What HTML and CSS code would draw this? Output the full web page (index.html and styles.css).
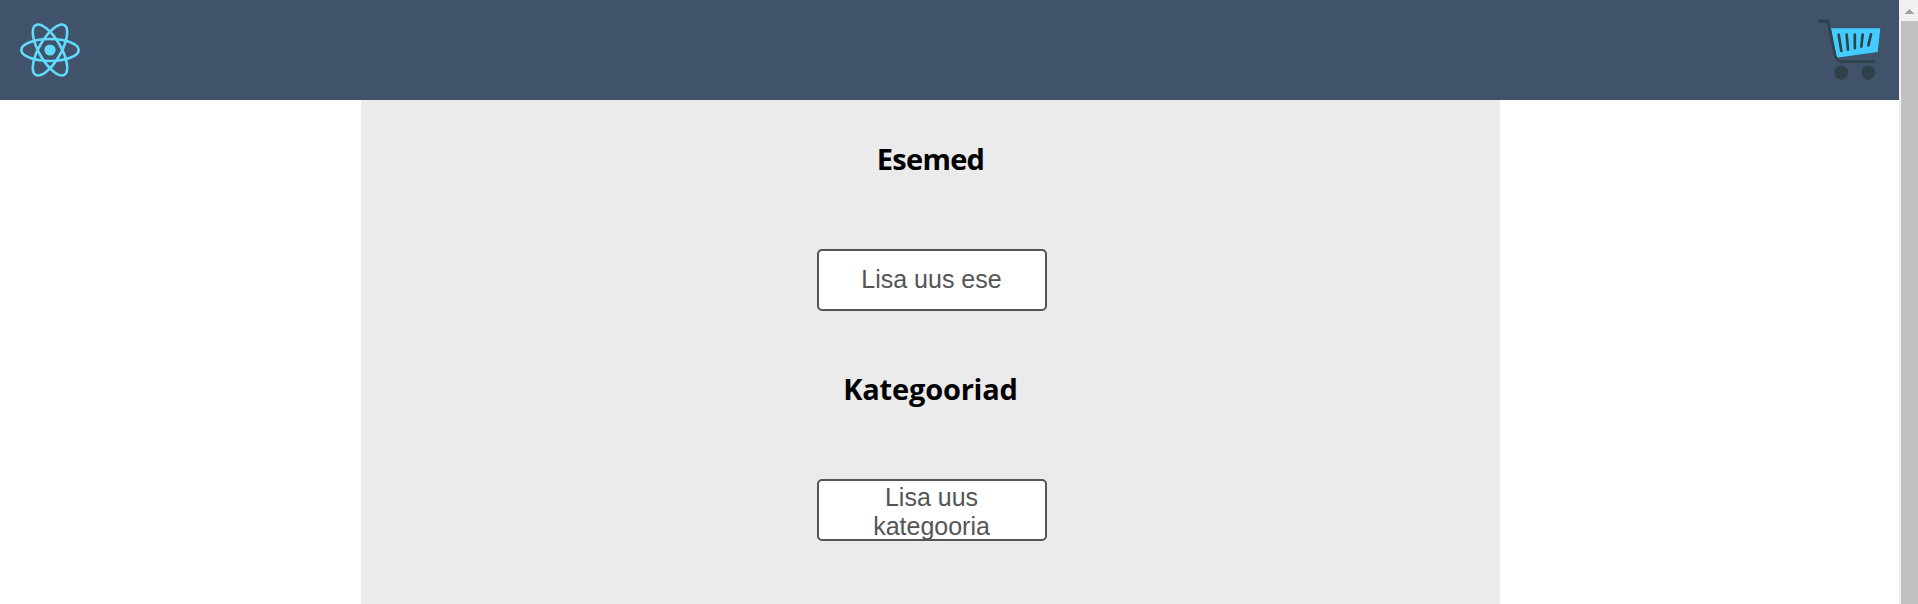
FILE: index.html
```html
<!DOCTYPE html>
<html lang="et">
<head>
<meta charset="utf-8">
<title>Admin</title>
<link rel="stylesheet" href="styles.css">
</head>
<body>
<div class="page">
  <header class="navbar">
    <svg class="logo" viewBox="-11.5 -11.5 23 23">
      <circle r="2.15" fill="#61dafb"/>
      <g fill="none" stroke="#61dafb">
        <ellipse rx="11" ry="4.2"/>
        <ellipse rx="11" ry="4.2" transform="rotate(60)"/>
        <ellipse rx="11" ry="4.2" transform="rotate(120)"/>
      </g>
    </svg>
    <svg class="cart" viewBox="50 55 195 190">
      <path d="M92 86H240L232 157L108 174Z" fill="#43ccff"/>
      <g fill="none" stroke="#2f4149" stroke-width="8" stroke-linecap="round" stroke-linejoin="round">
        <path d="M57 64.500H83L104 166Q109 186 126 186H221"/>
        <path d="M115 105L123 154M139 105L143 150M163.500 105V146M187 105L183 141M212 104L204 137"/>
      </g>
      <g fill="#2f4149"><circle cx="123" cy="219" r="21"/><circle cx="204" cy="219" r="21"/></g>
    </svg>
  </header>
  <main class="content">
    <section class="group">
      <h2 class="title title-short">Esemed</h2>
      <button class="button">Lisa uus ese</button>
    </section>
    <section class="group">
      <h2 class="title">Kategooriad</h2>
      <button class="button button-wrap">Lisa uus kategooria</button>
    </section>
  </main>
</div>
<div class="scrollbar">
  <div class="scroll-up"><svg class="arrow" viewBox="0 0 9 5" shape-rendering="crispEdges"><path d="M4 0h1v1h1v1h1v1h1v1h1v1H0V4h1V3h1V2h1V1h1z" fill="#a3a3a3"/></svg></div>
  <div class="thumb"></div>
</div>
</body>
</html>
```
FILE: styles.css
```css
body {
  margin: 0;
  height: 604px;
  display: flex;
  overflow: hidden;
  background: #fff;
}
.page {
  width: 1899px;
}
.navbar {
  height: 100px;
  box-sizing: border-box;
  padding: 0 17px 0 20px;
  display: flex;
  align-items: center;
  justify-content: space-between;
  background: #40536a;
}
.logo {
  width: 60px;
  height: 60px;
}
.cart {
  width: 65px;
  height: 63.330px;
}
.content {
  width: 1139px;
  height: 504px;
  margin-left: 361px;
  background: #ebebeb;
}
.group {
  height: 230px;
  display: flex;
  flex-direction: column;
  align-items: center;
}
.title {
  margin: 39px 0 70px;
  font: 700 29px/40px "Open Sans", sans-serif;
  letter-spacing: -0.200px;
  color: #000;
}
.title-short {
  letter-spacing: -0.750px;
}
.button {
  width: 230px;
  height: 62px;
  margin-left: 2px;
  padding: 0 40px 2px;
  border: 2px solid #555;
  border-radius: 5px;
  background: #fff;
  color: #555;
  font: 25px/29px "Liberation Sans", Arial, sans-serif;
}
.button-wrap {
  padding: 2px 40px 0;
}
.scrollbar {
  width: 19px;
  background: #f1f1f1;
}
.scroll-up {
  height: 21px;
  display: flex;
  justify-content: center;
}
.arrow {
  width: 9px;
  height: 5px;
  margin: 9px 0 0 2px;
}
.thumb {
  width: 17px;
  height: 583px;
  margin-left: 2px;
  background: #c1c1c1;
}
```
